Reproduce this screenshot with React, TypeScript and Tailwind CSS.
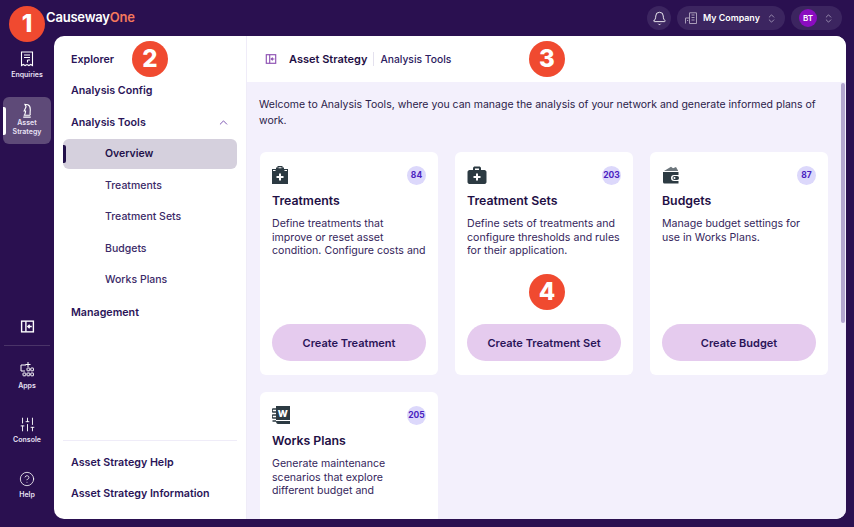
import React from "react";
import { Bell, ChevronsUpDown, ChevronUp, CircleHelp, SlidersVertical } from "lucide-react";

function Marker({ n, className }: { n: string; className: string }) {
  return (
    <div className={`absolute w-[36px] h-[36px] rounded-full bg-[#f04a30] text-white flex items-center justify-center text-[24px] font-extrabold z-10 ${className}`}>
      {n}
    </div>
  );
}

function PanelIcon({ color, size = 14 }: { color: string; size?: number }) {
  return (
    <svg width={size} height={size} viewBox="0 0 14 14" fill="none" stroke={color} strokeWidth="1.3">
      <rect x="1.5" y="2" width="11" height="10" />
      <path d="M5.5 2v10M11 7H7.5M9 5.3 7.3 7 9 8.700" />
    </svg>
  );
}

function NavItem({ children, className = "" }: { children: React.ReactNode; className?: string }) {
  return <div className={`h-[31.6px] flex items-center pl-[17px] text-[10.7px] font-semibold text-[#2a1458] ${className}`}>{children}</div>;
}

function SubItem({ children, active }: { children: React.ReactNode; active?: boolean }) {
  return (
    <div className={`relative h-[30px] mb-[1.6px] ml-[9px] mr-[9px] rounded-[6px] flex items-center pl-[42px] text-[10.5px] ${active ? "bg-[#d5d0dd] font-semibold text-[#22104a]" : "font-medium text-[#3b2a68]"}`}>
      {active && <div className="absolute left-0 top-[6px] w-[3px] h-[18px] bg-[#22104a] rounded-r-[2px]" />}
      {children}
    </div>
  );
}

const iconFill = "#2c3a42";

const TreatIcon = (
  <svg width="17" height="18" viewBox="1 0 17 18">
    <path fill={iconFill} d="M1 3h4V1.500h1.500V0h5v1.500H13V3h4v15H1z" />
    <path fill="#fff" d="M8 7.500h2V10h2.500v2H10v2.500H8V12H5.500v-2H8z" />
    <path fill="#fff" d="M2 4h2.500v1H2zM13.500 4H16v1h-2.500zM7.500 1.200h3v1h-3z" />
  </svg>
);
const SetIcon = (
  <svg width="20" height="18" viewBox="0 0 20 18">
    <path fill={iconFill} d="M6 4V2.500C6 1 7 .5 8 .5h4c1 0 2 .5 2 2V4h3.500c1 0 2 1 2 2v10c0 1-1 2-2 2h-15c-1 0-2-1-2-2V6c0-1 1-2 2-2zm2 0h4V2.500H8z" />
    <path fill="#fff" d="M9 7.500h2V10h2.500v2H11v2.500H9V12H6.500v-2H9z" />
  </svg>
);
const WalletIcon = (
  <svg width="18" height="18" viewBox="0 0 18 18">
    <path fill={iconFill} d="M1 6h15.500v3H12a3 3 0 0 0 0 6h4.500v2.500H2.500A1.500 1.500 0 0 1 1 16z" />
    <path fill="#6d767c" d="M2 5 9 .800l2 1.500L14 1l2 3.500v.5z" />
    <rect x="10.500" y="10" width="6.500" height="4" rx="2" fill={iconFill} />
    <circle cx="12.500" cy="12" r="1" fill="#fff" />
  </svg>
);
const BookIcon = (
  <svg width="18" height="18" viewBox="0 0 18 18">
    <path fill={iconFill} d="M4 0h14v14H4z" />
    <path fill={iconFill} d="M4 15h14v3H6c-1.200 0-2-1-2-3z" />
    <path stroke={iconFill} strokeWidth="1.300" fill="none" d="M.500 3h3.500M.500 6h3.500M.500 9h3.500M.500 12h3.500M.500 15h3.500M.800 3c-.8 0-.8 3 0 3M.800 9c-.8 0-.8 3 0 3" />
    <text x="5.700" y="10.500" fill="#fff" fontSize="9.500" fontWeight="800" fontFamily="Inter, sans-serif">W</text>
  </svg>
);

const BuildingIcon = (
  <svg width="12" height="12" viewBox="0 0 12 12" fill="none" stroke="#a89cb8" strokeWidth="1">
    <path d="M4.500 11.500V.8h7v10.700zM.5 11.500V6h4" />
    <path d="M6.500 3h3M6.500 5.500h3M6.500 8h3M2 8.500h1.200" />
  </svg>
);

function Card({ icon, count, title, desc, button }: { icon: React.ReactNode; count: string; title: string; desc: React.ReactNode; button?: string }) {
  return (
    <div className="bg-white rounded-[6px] px-[12px] pt-[14px] flex flex-col h-[223px]">
      <div className="flex items-start justify-between h-[19px]">
        {icon}
        <div className="w-[19px] h-[19px] rounded-full bg-[#dcd8fb] text-[#4a1fc0] text-[8.500px] font-bold flex items-center justify-center">{count}</div>
      </div>
      <div className="mt-[7px] text-[12.3px] leading-[18px] font-semibold text-[#1f0f45]">{title}</div>
      <div className="mt-[7px] h-[41px] overflow-hidden text-[10.6px] leading-[13.500px] text-[#35265c] font-normal">{desc}</div>
      {button && (
        <div className="mt-auto mb-[14px] h-[37px] pt-[1px] rounded-full bg-[#e5cbee] flex items-center justify-center text-[11px] font-semibold text-[#2a1458]">{button}</div>
      )}
    </div>
  );
}

const railLabel = "text-[7px] leading-[9.5px] font-semibold text-center text-[#e9e2f5]";

export default function App() {
  return (
    <div className="relative w-[854px] h-[527px] overflow-hidden bg-[#2a1050] flex flex-col font-['Inter',sans-serif]">
      <Marker n="1" className="left-[9px] top-[6px]" />
      <Marker n="2" className="left-[132px] top-[41px]" />
      <Marker n="3" className="left-[529px] top-[41px]" />
      <Marker n="4" className="left-[529px] top-[274px]" />

      <header className="h-[36px] flex items-center shrink-0 pl-[46px] pr-[12px]">
        <div className="text-[13px] font-semibold tracking-[-0.2px] text-white">
          Causeway<span className="text-[#f4785c]">One</span>
        </div>
        <div className="ml-auto flex items-center gap-[6px]">
          <div className="w-[24px] h-[24px] rounded-full bg-[#3c2560] flex items-center justify-center text-white">
            <Bell size={15} strokeWidth={1.4} />
          </div>
          <div className="w-[108px] h-[24px] rounded-full bg-[#3c2560] flex items-center pl-[8px] text-white">
            {BuildingIcon}
            <span className="ml-[6px] text-[8.900px] font-semibold">My Company</span>
            <ChevronsUpDown size={11} strokeWidth={1.4} className="ml-auto mr-[8px] text-[#c9c0d6]" />
          </div>
          <div className="w-[51px] h-[24px] rounded-full bg-[#3c2560] flex items-center pl-[8px] text-white">
            <div className="w-[18px] h-[18px] rounded-full bg-[#8a0cc0] flex items-center justify-center text-[8px] font-semibold">BT</div>
            <ChevronsUpDown size={11} strokeWidth={1.4} className="ml-auto mr-[8px] text-[#c9c0d6]" />
          </div>
        </div>
      </header>

      <div className="flex flex-1 min-h-0">
        <nav className="w-[54px] shrink-0 flex flex-col pt-[15px] pb-[28px]">
          <div className="w-full flex flex-col items-center text-white">
            <svg width="14" height="16" viewBox="0 0 14 16" fill="none" stroke="#fff" strokeWidth="1.100">
              <path d="M1.500 1h11v13.500l-1.800-1-1.800 1-1.900-1-1.900 1-1.800-1-1.800 1z" />
              <path d="M4 4h6M4 6.500h6M7.500 9H10M7.500 9v2.500" />
            </svg>
            <div className={`${railLabel} mt-[3px]`}>Enquiries</div>
          </div>
          <div className="relative mt-[17px] mx-[3px] w-[48px] h-[47px] bg-[#5e4a78] rounded-[6px] pt-[6px] flex flex-col items-center">
            <div className="absolute left-0 top-[10px] w-[3px] h-[28px] bg-white rounded-r-[2px]" />
            <svg width="12" height="15" viewBox="0 0 12 16" fill="none" stroke="#fff" strokeWidth="1.200">
              <path d="M2 15h8M2.500 13h7M3.500 13c.5-2 1-3 1-4.500H3L5 4 3.800 1.500 7 1.800c2 .8 2.500 3 2.500 5 0 2.500-.5 4.500 0 6.200" />
            </svg>
            <div className={railLabel}>Asset<br />Strategy</div>
          </div>
          <div className="flex-1" />
          <div className="w-full flex flex-col items-center">
            <PanelIcon color="#fff" size={15} />
            <div className="w-[46px] h-px bg-[#4a3468] mt-[11px] mb-[16px]" />
            <svg width="14" height="16" viewBox="0 0 14 16" fill="none" stroke="#fff" strokeWidth="1">
              <path d="M6 3H1v6h4" />
              <path d="M8 0v5M5.500 2.500h5" />
              <rect x="7" y="6" width="2.800" height="2.800" rx=".5" />
              <rect x="10.800" y="6" width="2.800" height="2.800" rx=".5" />
              <rect x="7" y="11" width="2.800" height="2.800" rx=".5" />
              <rect x="10.800" y="11" width="2.800" height="2.800" rx=".5" />
              <rect x="3" y="11" width="2.800" height="2.800" rx=".5" />
            </svg>
            <div className={`${railLabel} mt-[3px]`}>Apps</div>
            <SlidersVertical size={17} strokeWidth={1.3} className="text-white mt-[26px]" />
            <div className={`${railLabel} mt-[2px]`}>Console</div>
            <CircleHelp size={16} strokeWidth={1.2} className="text-white mt-[26px]" />
            <div className={`${railLabel} mt-[3px]`}>Help</div>
          </div>
        </nav>

        <main className="flex-1 mr-[8px] mb-[8px] bg-white rounded-[10px] flex overflow-hidden min-w-0">
          <aside className="w-[193px] shrink-0 border-r border-[#efecf8] flex flex-col pt-[8px] pb-[9px]">
            <NavItem>Explorer</NavItem>
            <NavItem>Analysis Config</NavItem>
            <NavItem>
              Analysis Tools
              <ChevronUp size={13} strokeWidth={1.6} className="ml-auto mr-[16px] text-[#6b3fa8]" />
            </NavItem>
            <SubItem active>Overview</SubItem>
            <SubItem>Treatments</SubItem>
            <SubItem>Treatment Sets</SubItem>
            <SubItem>Budgets</SubItem>
            <SubItem>Works Plans</SubItem>
            <NavItem>Management</NavItem>
            <div className="flex-1" />
            <div className="mx-[9px] h-px bg-[#efecf8] mb-[6px]" />
            <NavItem>Asset Strategy Help</NavItem>
            <NavItem>Asset Strategy Information</NavItem>
          </aside>

          <section className="flex-1 min-w-0 flex flex-col">
            <div className="h-[46px] shrink-0 flex items-center pl-[18px] bg-white">
              <PanelIcon color="#8a4bb0" size={12} />
              <span className="ml-[12px] text-[11px] font-semibold text-[#1f0f45]">Asset Strategy</span>
              <span className="mx-[6px] w-px h-[14px] bg-[#e4e1ee]" />
              <span className="text-[10.300px] pt-[1px] font-medium text-[#2c2060]">Analysis Tools</span>
            </div>
            <div className="flex-1 min-h-0 relative bg-[#f3f0fc] overflow-hidden pl-[12px] pt-[15px] pr-[18px]">
              <div className="absolute right-[1px] top-[1px] w-[4px] h-[240px] bg-[#b3a6cf] rounded-[2px]" />
              <p className="text-[10.500px] leading-[15.500px] text-[#2a2048] w-[570px]">
                Welcome to Analysis Tools, where you can manage the analysis of your network and generate informed plans of work.
              </p>
              <div className="grid grid-cols-[178px_178px_178px] gap-x-[17px] gap-y-[17px] mt-[24px] ml-[1px]">
                <Card icon={TreatIcon} count="84" title="Treatments" desc="Define treatments that improve or reset asset condition. Configure costs and" button="Create Treatment" />
                <Card icon={SetIcon} count="203" title="Treatment Sets" desc="Define sets of treatments and configure thresholds and rules for their application." button="Create Treatment Set" />
                <Card icon={WalletIcon} count="87" title="Budgets" desc="Manage budget settings for use in Works Plans." button="Create Budget" />
                <Card icon={BookIcon} count="205" title="Works Plans" desc="Generate maintenance scenarios that explore different budget and" />
              </div>
            </div>
          </section>
        </main>
      </div>
    </div>
  );
}
